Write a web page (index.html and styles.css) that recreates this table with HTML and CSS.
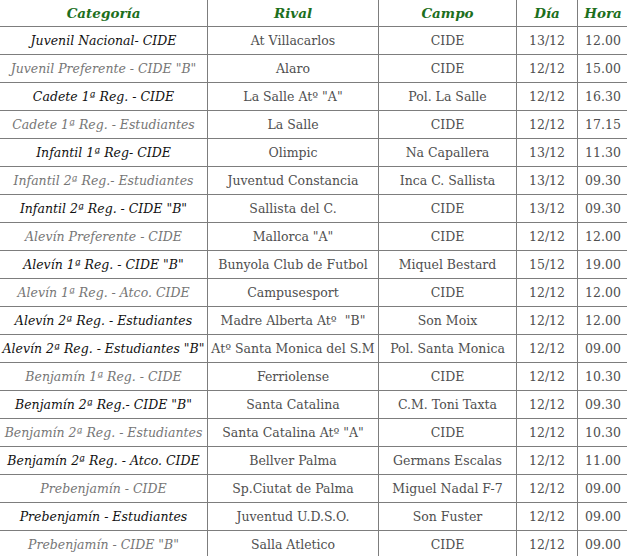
FILE: index.html
```html
<!DOCTYPE html>
<html lang="es">
<head>
<meta charset="utf-8">
<link rel="stylesheet" href="styles.css">
</head>
<body>
<table class="fixtures">
<colgroup>
<col class="c-cat"><col class="c-rival"><col class="c-campo"><col class="c-dia"><col class="c-hora">
</colgroup>
<thead>
<tr><th>Categoría</th><th>Rival</th><th>Campo</th><th>Día</th><th>Hora</th></tr>
</thead>
<tbody>
<tr class="dark"><td class="cat">Juvenil Nacional- CIDE</td><td>At Villacarlos</td><td>CIDE</td><td>13/12</td><td>12.00</td></tr>
<tr class="light"><td class="cat">Juvenil Preferente - CIDE "B"</td><td>Alaro</td><td>CIDE</td><td>12/12</td><td>15.00</td></tr>
<tr class="dark"><td class="cat">Cadete 1ª Reg. - CIDE</td><td>La Salle Atº "A"</td><td>Pol. La Salle</td><td>12/12</td><td>16.30</td></tr>
<tr class="light"><td class="cat">Cadete 1ª Reg. - Estudiantes</td><td>La Salle</td><td>CIDE</td><td>12/12</td><td>17.15</td></tr>
<tr class="dark"><td class="cat">Infantil 1ª Reg- CIDE</td><td>Olimpic</td><td>Na Capallera</td><td>13/12</td><td>11.30</td></tr>
<tr class="light"><td class="cat">Infantil 2ª Reg.- Estudiantes</td><td>Juventud Constancia</td><td>Inca C. Sallista</td><td>13/12</td><td>09.30</td></tr>
<tr class="dark"><td class="cat">Infantil 2ª Reg. - CIDE "B"</td><td>Sallista del C.</td><td>CIDE</td><td>13/12</td><td>09.30</td></tr>
<tr class="light"><td class="cat">Alevín Preferente - CIDE</td><td>Mallorca "A"</td><td>CIDE</td><td>12/12</td><td>12.00</td></tr>
<tr class="dark"><td class="cat">Alevín 1ª Reg. - CIDE "B"</td><td>Bunyola Club de Futbol</td><td>Miquel Bestard</td><td>15/12</td><td>19.00</td></tr>
<tr class="light"><td class="cat">Alevín 1ª Reg. - Atco. CIDE</td><td>Campusesport</td><td>CIDE</td><td>12/12</td><td>12.00</td></tr>
<tr class="dark"><td class="cat">Alevín 2ª Reg. - Estudiantes</td><td>Madre Alberta Atº&nbsp; "B"</td><td>Son Moix</td><td>12/12</td><td>12.00</td></tr>
<tr class="dark"><td class="cat">Alevín 2ª Reg. - Estudiantes "B"</td><td>Atº Santa Monica del S.M</td><td>Pol. Santa Monica</td><td>12/12</td><td>09.00</td></tr>
<tr class="light"><td class="cat">Benjamín 1ª Reg. - CIDE</td><td>Ferriolense</td><td>CIDE</td><td>12/12</td><td>10.30</td></tr>
<tr class="dark"><td class="cat">Benjamín 2ª Reg.- CIDE "B"</td><td>Santa Catalina</td><td>C.M. Toni Taxta</td><td>12/12</td><td>09.30</td></tr>
<tr class="light"><td class="cat">Benjamín 2ª Reg. - Estudiantes</td><td>Santa Catalina Atº "A"</td><td>CIDE</td><td>12/12</td><td>10.30</td></tr>
<tr class="dark"><td class="cat">Benjamín 2ª Reg. - Atco. CIDE</td><td>Bellver Palma</td><td>Germans Escalas</td><td>12/12</td><td>11.00</td></tr>
<tr class="light"><td class="cat">Prebenjamín - CIDE</td><td>Sp.Ciutat de Palma</td><td>Miguel Nadal F-7</td><td>12/12</td><td>09.00</td></tr>
<tr class="dark"><td class="cat">Prebenjamín - Estudiantes</td><td>Juventud U.D.S.O.</td><td>Son Fuster</td><td>12/12</td><td>09.00</td></tr>
<tr class="light"><td class="cat">Prebenjamín - CIDE "B"</td><td>Salla Atletico</td><td>CIDE</td><td>12/12</td><td>09.00</td></tr>
</tbody>
</table>
</body>
</html>
```
FILE: styles.css
```css
html, body {
  margin: 0;
  padding: 0;
  background: #ffffff;
  overflow: hidden;
}

.fixtures {
  border-collapse: collapse;
  table-layout: fixed;
  width: 629px;
  margin: -1px 0 0 -1px;
  font-family: "DejaVu Serif", serif;
  font-size: 12.5px;
  color: #4f4f4f;
}

.c-cat { width: 208px; }
.c-rival { width: 171px; }
.c-campo { width: 138px; }
.c-dia { width: 61px; }
.c-hora { width: 51px; }

.fixtures th,
.fixtures td {
  border: 1px solid #7d7d7d;
  padding: 0;
  text-align: center;
  white-space: nowrap;
  overflow: hidden;
}

.fixtures thead th {
  height: 26px;
  color: #1d6f1d;
  font-style: italic;
  font-weight: bold;
  font-size: 13.5px;
}

.fixtures tbody td {
  height: 27px;
}

.fixtures td.cat {
  font-style: italic;
}

.fixtures tr.dark td.cat {
  color: #111111;
}

.fixtures tr.light td.cat {
  color: #767676;
}
```
